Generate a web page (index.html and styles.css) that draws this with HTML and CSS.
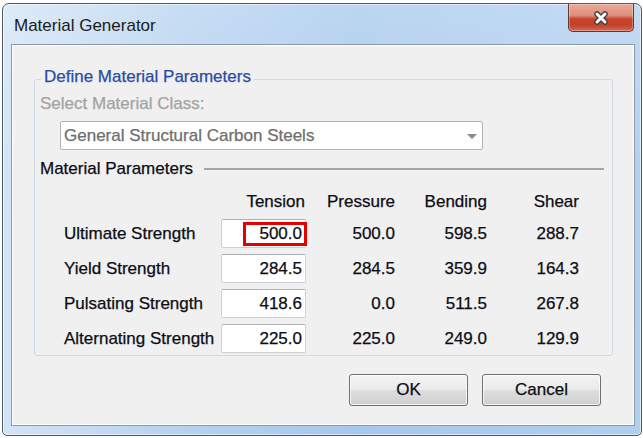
FILE: index.html
```html
<!DOCTYPE html>
<html>
<head>
<meta charset="utf-8">
<link rel="stylesheet" href="styles.css">
</head>
<body>
<div class="window">
  <div class="titlebar">
    <span class="title">Material Generator</span>
    <button class="close" aria-label="Close">
      <svg width="18" height="16" viewBox="0 0 18 16">
        <path d="M5 4 L13 12 M13 4 L5 12" stroke="#3c3c3c" stroke-width="5.5" stroke-linecap="round" fill="none"/>
        <path d="M5 4 L13 12 M13 4 L5 12" stroke="#ffffff" stroke-width="3" stroke-linecap="round" fill="none"/>
      </svg>
    </button>
  </div>
  <div class="client">
    <div class="group">
      <div class="legend">Define Material Parameters</div>
      <div class="select-label">Select Material Class:</div>
      <div class="combo"><span>General Structural Carbon Steels</span><span class="arrow"></span></div>
      <div class="section"><span>Material Parameters</span><span class="rule"></span></div>
      <div class="table">
        <div class="head"></div>
        <div class="head tension">Tension</div>
        <div class="head">Pressure</div>
        <div class="head">Bending</div>
        <div class="head">Shear</div>

        <div class="label">Ultimate Strength</div>
        <div class="field">500.0<span class="mark"></span></div>
        <div class="num">500.0</div>
        <div class="num">598.5</div>
        <div class="num">288.7</div>

        <div class="label">Yield Strength</div>
        <div class="field">284.5</div>
        <div class="num">284.5</div>
        <div class="num">359.9</div>
        <div class="num">164.3</div>

        <div class="label">Pulsating Strength</div>
        <div class="field">418.6</div>
        <div class="num">0.0</div>
        <div class="num">511.5</div>
        <div class="num">267.8</div>

        <div class="label">Alternating Strength</div>
        <div class="field">225.0</div>
        <div class="num">225.0</div>
        <div class="num">249.0</div>
        <div class="num">129.9</div>
      </div>
    </div>
    <div class="buttons">
      <button class="btn">OK</button>
      <button class="btn">Cancel</button>
    </div>
  </div>
</div>
</body>
</html>
```
FILE: styles.css
```css
html, body {
  margin: 0;
  padding: 0;
  background: #ffffff;
}
body {
  padding: 3px 2px 0 2px;
  font-family: "Liberation Sans", Arial, sans-serif;
  font-size: 17px;
  line-height: 19px;
  color: #0c0c14;
}
.window {
  box-sizing: border-box;
  width: 640px;
  height: 433px;
  border: 1px solid #4f5a68;
  border-radius: 7px 7px 5px 5px;
  padding: 0 6px 9px 8px;
  display: flex;
  flex-direction: column;
  background:
    linear-gradient(to right, rgba(255,255,255,0.5) 0%, rgba(255,255,255,0.18) 28%, rgba(255,255,255,0) 55%, rgba(255,255,255,0.12) 100%),
    linear-gradient(to bottom, #bcd6f1 0%, #a9caed 40%, #a6c8ec 100%);
  box-shadow: inset 0 0 0 1px rgba(255,255,255,0.55);
}
.titlebar {
  height: 40px;
  flex: none;
  display: flex;
  justify-content: space-between;
  align-items: flex-start;
  padding-left: 3px;
}
.title {
  padding-top: 12px;
  color: #1b1b1b;
}
.close {
  box-sizing: border-box;
  width: 66px;
  height: 28px;
  margin: 0 1px 0 0;
  padding: 0;
  border: 1px solid #5c3a35;
  border-top: none;
  border-radius: 0 0 5px 5px;
  background: linear-gradient(to bottom, #e9a899 0%, #df907e 42%, #c8432b 55%, #c3412a 78%, #d66a53 100%);
  box-shadow: inset 0 0 0 1px rgba(255,255,255,0.3);
  display: flex;
  align-items: center;
  justify-content: center;
}
.close svg {
  display: block;
}
.client {
  flex: 1;
  box-sizing: border-box;
  width: 624px;
  border: 1px solid #8a98a8;
  background: #f0f0f0;
  box-shadow: inset 0 0 0 1px #ffffff;
  display: flex;
  flex-direction: column;
  -webkit-text-stroke: 0.25px currentColor;
}
.group {
  box-sizing: border-box;
  width: 579px;
  margin: 34px 0 0 22px;
  border: 1px solid #d0dae4;
  border-radius: 3px;
  padding: 0 8px 2px 5px;
}
.legend {
  width: fit-content;
  margin: -13px 0 0 1px;
  padding: 0 3px;
  background: #f0f0f0;
  color: #2a4ba6;
}
.select-label {
  margin-top: 8px;
  color: #a3a3a3;
}
.combo {
  box-sizing: border-box;
  width: 423px;
  height: 29px;
  margin: 8px 0 0 20px;
  padding: 4px 5px 4px 3px;
  border: 1px solid #b3b3b3;
  border-radius: 2px;
  background: #ffffff;
  color: #6e6e6e;
  display: flex;
  justify-content: space-between;
  align-items: center;
}
.arrow {
  width: 0;
  height: 0;
  border-left: 5px solid transparent;
  border-right: 5px solid transparent;
  border-top: 5px solid #8a8a8a;
  margin-top: 1px;
}
.section {
  margin-top: 9px;
  display: flex;
  align-items: center;
  gap: 11px;
}
.rule {
  flex: 1;
  height: 2px;
  background: #a6a6a6;
}
.table {
  margin: 14px 0 0 24px;
  display: grid;
  grid-template-columns: 157px 85px 92px 92px 92px;
  grid-template-rows: 21px repeat(4, 29px);
  row-gap: 6px;
}
.head {
  text-align: right;
  padding-right: 3px;
}
.head.tension {
  padding-right: 1px;
}
.label {
  align-self: center;
}
.num {
  align-self: center;
  text-align: right;
  padding-right: 3px;
}
.field {
  position: relative;
  box-sizing: border-box;
  height: 29px;
  padding: 4px 3px 0 0;
  text-align: right;
  background: #ffffff;
  border: 1px solid #ccd1d8;
  border-top-color: #abafb6;
  border-radius: 2px;
}
.mark {
  position: absolute;
  top: 2px;
  right: -2px;
  width: 64px;
  height: 24px;
  box-sizing: border-box;
  border: 3px solid #e60000;
}
.buttons {
  margin-top: 18px;
  padding-right: 33px;
  display: flex;
  justify-content: flex-end;
  gap: 14px;
}
.btn {
  box-sizing: border-box;
  width: 119px;
  height: 32px;
  padding: 0;
  font-family: "Liberation Sans", Arial, sans-serif;
  font-size: 17px;
  color: #0c0c14;
  -webkit-text-stroke: 0.25px currentColor;
  border: 1px solid #707070;
  border-radius: 3px;
  background: linear-gradient(to bottom, #f3f3f3 0%, #ebebeb 48%, #dddddd 52%, #d0d0d0 100%);
  box-shadow: inset 0 0 0 1px rgba(255,255,255,0.75);
}
```
